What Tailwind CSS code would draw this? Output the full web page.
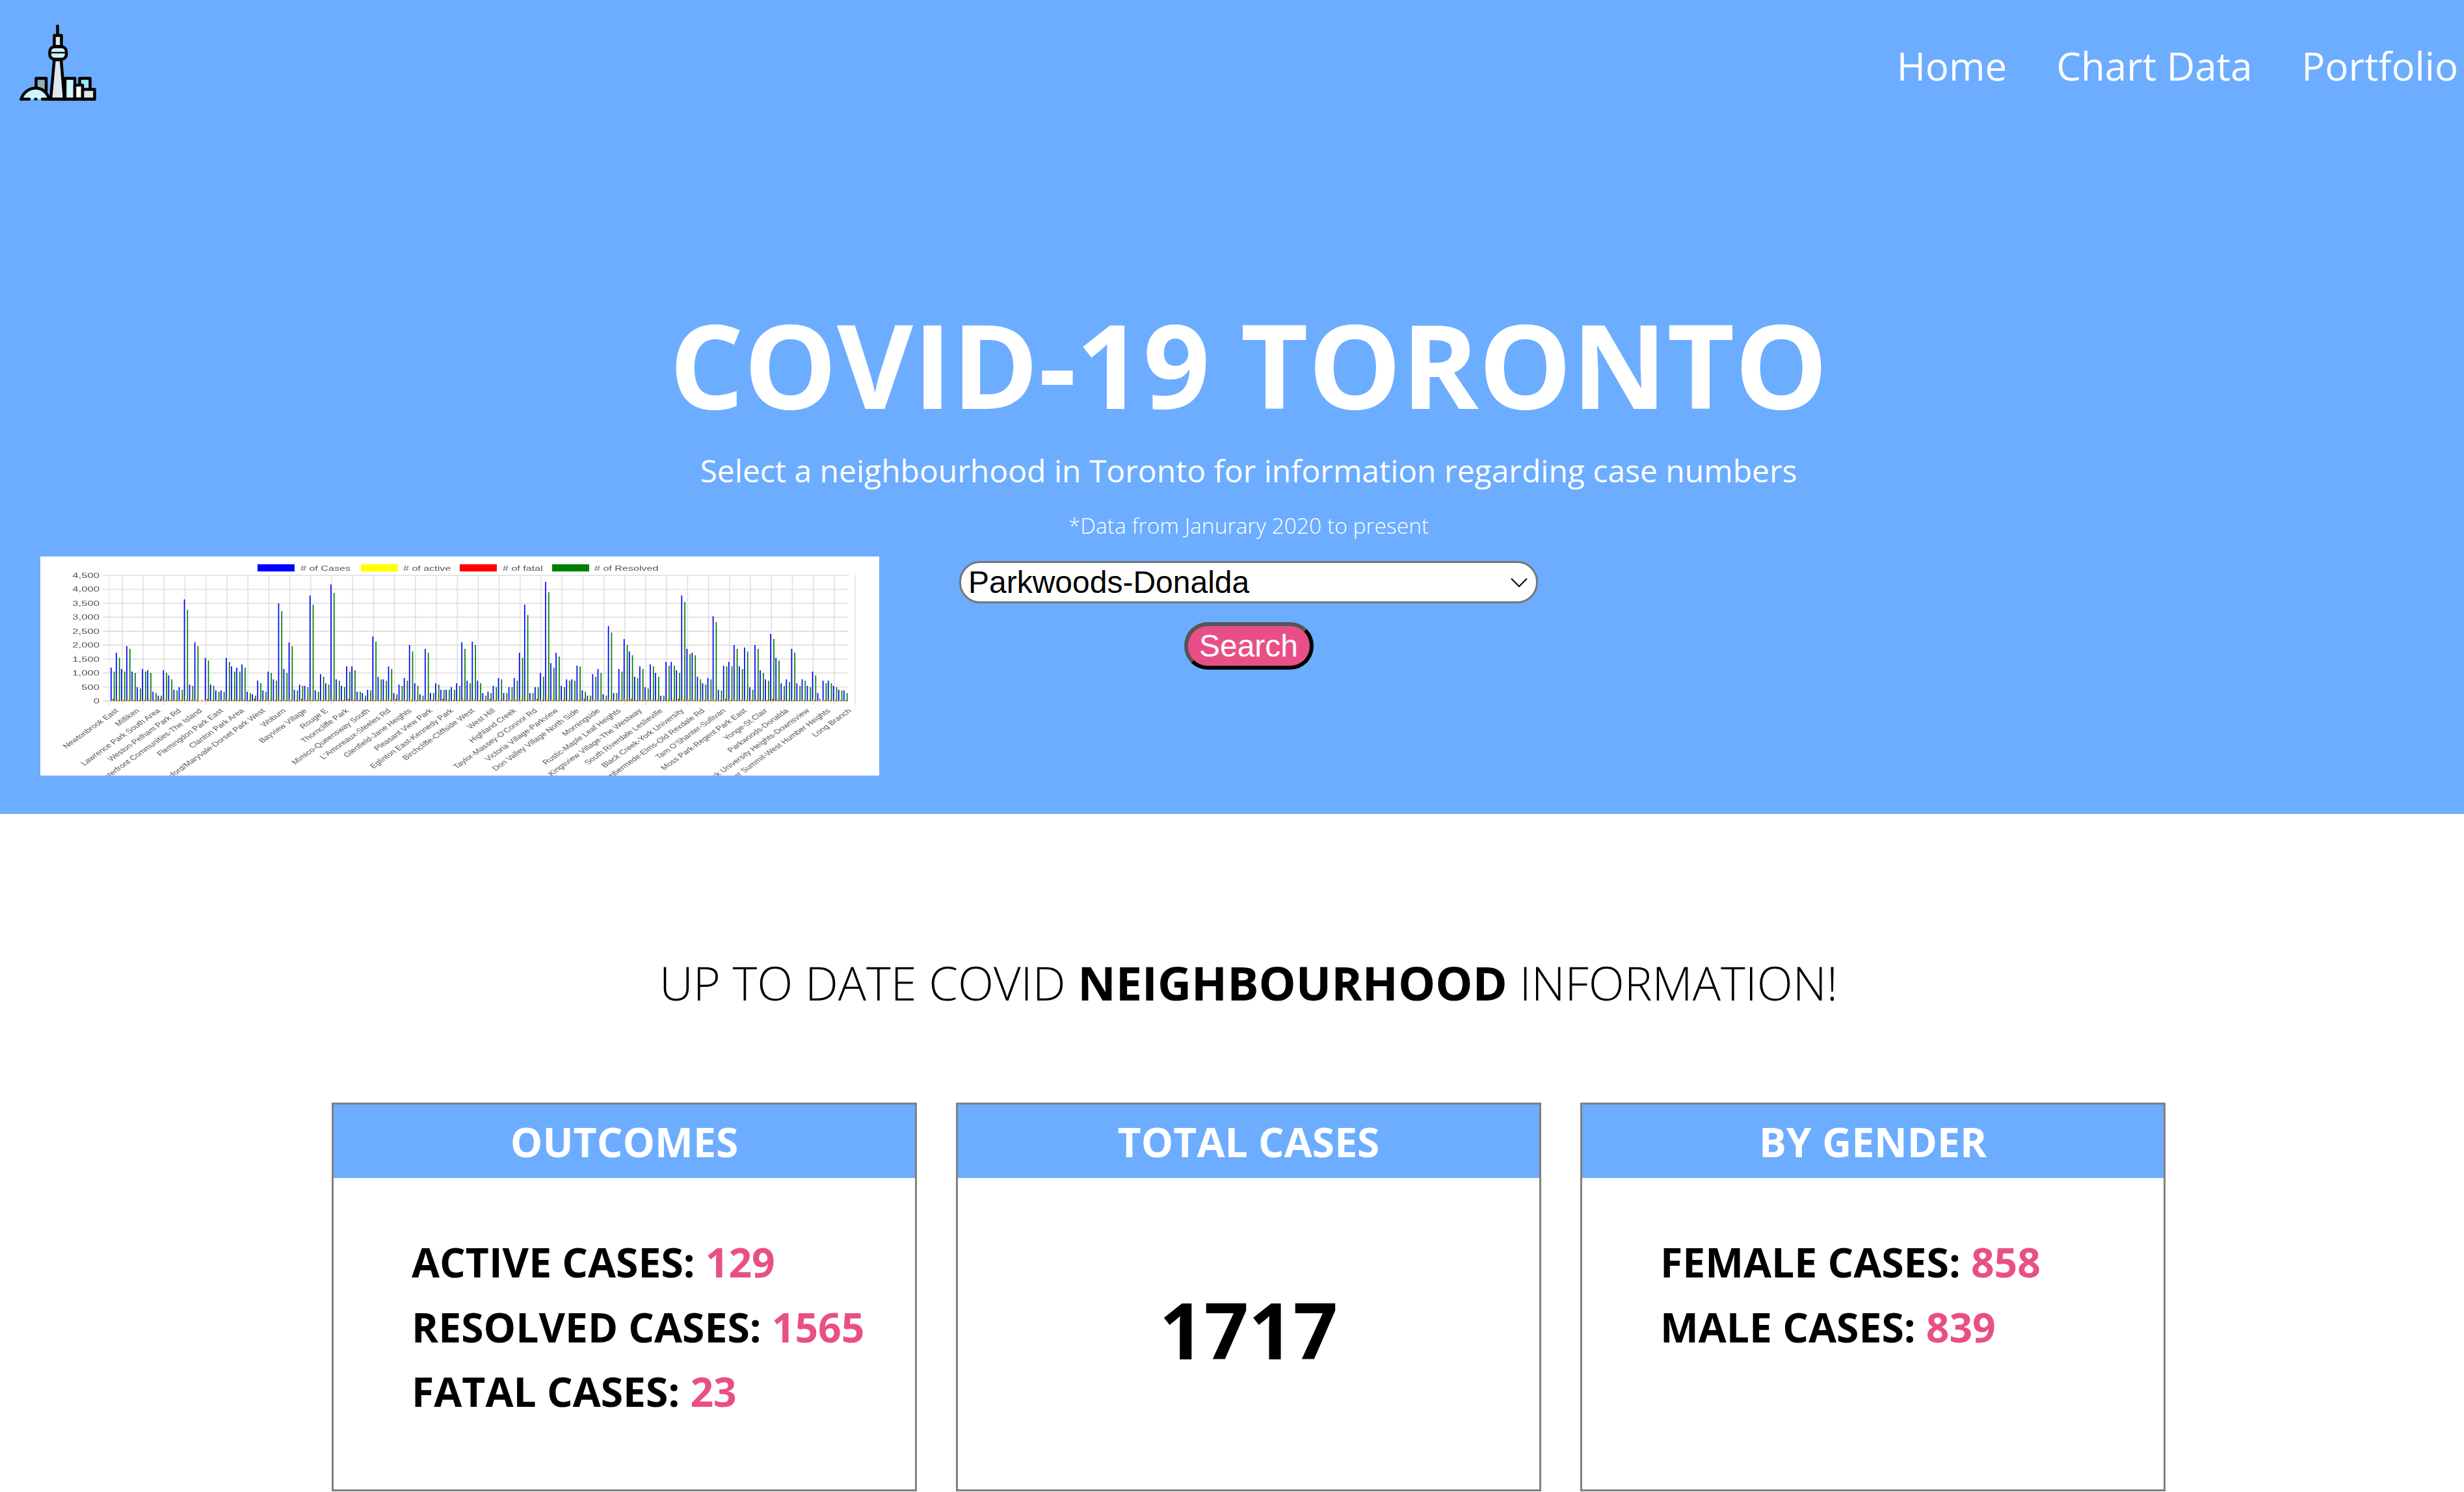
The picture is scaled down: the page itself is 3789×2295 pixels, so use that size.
<!DOCTYPE html>
<html lang="en">
<head>
  <meta charset="UTF-8" />
  <title>COVID-19 Toronto</title>
  <script src="https://cdn.jsdelivr.net/npm/@tailwindcss/browser@4"></script>
</head>
<body class="h-screen overflow-hidden bg-white font-['Open_Sans',sans-serif]">
<div class="w-[3840px]">

  <!-- hero -->
  <section class="h-[1252px] bg-[#6cadff] text-white">
    <nav class="flex justify-between items-start pl-[28px] pt-[36px] h-[396px]">
      <svg class="w-[122px] h-[122px]" viewBox="28 36 122 122" fill="none" stroke="#000" stroke-width="4.5" stroke-linejoin="round" stroke-linecap="round">
        <line x1="88.5" y1="40" x2="88.5" y2="54" />
        <rect x="55.5" y="120.5" width="15.5" height="22" fill="#8fb0c4" />
        <rect x="122.5" y="120.5" width="16" height="18" fill="#99e6f5" />
        <rect x="100" y="120.5" width="15" height="32" fill="#cff4fc" />
        <rect x="115" y="131" width="12" height="21" fill="#fff" />
        <rect x="127" y="137.5" width="18.5" height="15" fill="#e1e6ec" />
        <path d="M78 152.5 L83.5 92 H94 L99 152.5 Z" fill="#e1e6ec" />
        <rect x="83.5" y="54.5" width="11" height="17" fill="#e1e6ec" />
        <rect x="76.5" y="72" width="25.5" height="19" rx="7" fill="#cff4fc" />
        <line x1="78" y1="81" x2="100" y2="81" stroke-width="2.5" stroke="#111" />
        <path d="M32.5 152.5 C36 142 45 135.5 55 135.5 C65 135.5 72 142 76 152.5 Z" fill="#cff4fc" stroke="none" />
        <path d="M32.5 152.5 C36 142 45 135.5 55 135.5 C65 135.5 72 142 76 152.5" />
        <path d="M32.5 152.5 H45 M54.5 152.5 H55.5 M65 152.5 H145" />
      </svg>
      <ul class="flex gap-[76px] pr-[60px] text-[60px] leading-[82px] pt-[24px]">
        <li>Home</li>
        <li>Chart Data</li>
        <li>Portfolio</li>
      </ul>
    </nav>

    <div class="text-center">
      <h1 class="text-[180px] leading-[240px] font-bold mt-[44px]">COVID-19 TORONTO</h1>
      <p class="text-[48px] leading-[68px] mt-[10px]">Select a neighbourhood in Toronto for information regarding case numbers</p>
      <p class="text-[33.6px] leading-[48px] font-light mt-[26px]">*Data from Janurary 2020 to present</p>
    </div>

    <div class="grid grid-cols-[1fr_890px_1fr] mt-[24px]">
      <div id="chart" class="ml-[62px] w-[1290px] h-[337px] bg-white"></div>
      <form class="flex flex-col items-center pt-[7px]">
        <div class="relative w-[890px]">
          <select class="appearance-none block w-full h-[65px] pl-[11px] bg-white text-black text-[48px] leading-[55px] font-['Liberation_Sans',sans-serif] border-[3px] border-[#767676] rounded-[32px]">
            <option>Parkwoods-Donalda</option>
          </select>
          <svg class="absolute right-[16px] top-[26px] w-[26px] h-[15px]" viewBox="0 0 26 15" fill="none" stroke="#000" stroke-width="2"><path d="M1 1 L13 13 L25 1" /></svg>
        </div>
        <button type="button" class="mt-[29px] w-[199px] h-[73px] bg-[#e94f87] text-white text-[48px] leading-none font-['Liberation_Sans',sans-serif] rounded-[36px] border-[6px] border-t-[#555] border-l-[#555] border-r-black border-b-black">Search</button>
      </form>
      <div></div>
    </div>
  </section>

  <!-- info -->
  <section class="pt-[210px]">
    <h2 class="text-center text-[72px] leading-[98px] font-light text-black">UP TO DATE COVID <strong class="font-bold">NEIGHBOURHOOD</strong> INFORMATION!</h2>

    <div class="flex justify-center gap-[60px] mt-[136px]">
      <div class="w-[900px] h-[598px] border-[3px] border-[#808080]">
        <h3 class="h-[113px] bg-[#6cadff] text-white text-center text-[62.4px] leading-[113px] font-bold">OUTCOMES</h3>
        <div class="pl-[120px] pt-[79px] text-[62.4px] leading-[99.5px] font-bold text-black">
          <p>ACTIVE CASES: <span class="text-[#e94f87]">129</span></p>
          <p>RESOLVED CASES: <span class="text-[#e94f87]">1565</span></p>
          <p>FATAL CASES: <span class="text-[#e94f87]">23</span></p>
        </div>
      </div>
      <div class="w-[900px] h-[598px] border-[3px] border-[#808080]">
        <h3 class="h-[113px] bg-[#6cadff] text-white text-center text-[62.4px] leading-[113px] font-bold">TOTAL CASES</h3>
        <p class="text-center pt-[148px] text-[120px] leading-[170px] font-bold text-black">1717</p>
      </div>
      <div class="w-[900px] h-[598px] border-[3px] border-[#808080]">
        <h3 class="h-[113px] bg-[#6cadff] text-white text-center text-[62.4px] leading-[113px] font-bold">BY GENDER</h3>
        <div class="pl-[120px] pt-[79px] text-[62.4px] leading-[99.5px] font-bold text-black">
          <p>FEMALE CASES: <span class="text-[#e94f87]">858</span></p>
          <p>MALE CASES: <span class="text-[#e94f87]">839</span></p>
        </div>
      </div>
    </div>
  </section>
</div>

<script>
  // tops of the bars, read off the chart (y in 3x crop units, 742 = zero)
  const blue = [588,519,594,489,606,678,594,600,699,717,600,624,690,678,273,666,471,742,543,666,693,693,543,582,588,573,699,711,648,693,606,642,291,594,471,690,666,672,255,693,618,660,204,642,672,582,582,699,705,690,444,630,642,582,705,666,636,483,660,711,501,705,660,690,690,678,
    660,471,648,468,648,705,699,672,636,705,678,636,519,297,705,678,612,192,567,519,672,642,642,579,693,717,618,594,711,396,705,594,456,513,630,582,678,573,612,717,561,561,600,255,501,519,630,660,636,351,690,579,561,483,582,495,678,483,600,642,432,543,660,642,501,660,642,672,606,705,648,648,672,690,693];
  const green = [606,543,606,501,612,684,606,612,705,717,612,642,693,690,321,672,489,742,555,672,699,699,561,606,606,588,705,717,660,699,612,648,327,612,489,693,672,678,297,699,630,666,243,648,678,606,600,699,717,693,468,642,648,594,711,672,648,513,672,717,519,705,666,690,690,690,
    672,501,660,483,660,717,705,678,642,705,678,648,543,345,705,678,630,240,588,537,678,648,648,582,699,717,630,612,717,426,705,606,483,531,636,594,684,582,630,717,579,579,612,285,525,531,642,666,642,378,693,582,582,501,594,513,690,501,612,648,456,555,672,654,519,672,648,678,624,742,660,660,678,693,705];
  const names = ["Newtonbrook East","Milliken","Lawrence Park South Area","Weston-Pelham Park Rd","Waterfront Communities-The Island","Flemingdon Park East","Clanton Park Area","Wexford/Maryvale-Dorset Park West","Woburn","Bayview Village","Rouge E","Thorncliffe Park","Mimico-Queensway South","L'Amoreaux-Steeles Rd","Glenfield-Jane Heights","Pleasant View Park","Eglinton East-Kennedy Park","Birchcliffe-Cliffside West","West Hill","Highland Creek","Taylor-Massey-O'Connor Rd","Victoria Village-Parkview","Don Valley Village North Side","Morningside","Rustic-Maple Leaf Heights","Kingsview Village-The Westway","South Riverdale Leslieville","Black Creek-York University","Humbermede-Elms-Old Rexdale Rd","Tam O'Shanter-Sullivan","Moss Park-Regent Park East","Yonge-St.Clair","Parkwoods-Donalda","York University Heights-Downsview","Humber Summit-West Humber Heights","Long Branch"];

  const yTop = v => 830 + v / 3;
  const base = 1077.3;
  let s = '<svg class="block blur-[0.6px]" width="1290" height="337" viewBox="62 855 1290 337" font-family="Liberation Sans, sans-serif" fill="#555">';

  // grid
  for (let i = 0; i <= 9; i++) {
    const y = 884 + i * 21.47;
    s += `<line x1="158" x2="1305" y1="${y}" y2="${y}" stroke="#ddd" stroke-width="${i == 9 ? 2 : 1.6}"/>`;
    const label = (4500 - i * 500).toLocaleString("en-US");
    s += `<text text-anchor="end" transform="translate(153 ${y + 4}) scale(1.45 1)" font-size="11.5">${label}</text>`;
  }
  s += '<line x1="168" x2="168" y1="884" y2="1083" stroke="#ddd"/>';
  names.forEach((n, i) => {
    const x = 188 + i * 32.2;
    s += `<line x1="${x}" x2="${x}" y1="884" y2="1083" stroke="#ddd" stroke-width="1.4"/>`;
    s += `<text text-anchor="end" transform="translate(${183 + i * 32.2} 1093) scale(1.4 1) rotate(-45)" font-size="10">${n}</text>`;
  });

  // bars
  blue.forEach((b, i) => {
    const x = 170 + i * 8.05;
    const h = base - yTop(b);
    const yellow = Math.min(9, 1 + h * 0.04 + (i * 7 % 5) * 0.4);
    const red = 1.5 + (i % 9 == 0 ? 2 : 0);
    s += `<rect x="${x}" y="${yTop(b)}" width="1.7" height="${h}" fill="#00f"/>`;
    s += `<rect x="${x + 1.7}" y="${base - yellow}" width="1.6" height="${yellow}" fill="#ff0"/>`;
    s += `<rect x="${x + 3.2}" y="${base - red}" width="1.6" height="${red}" fill="#f00"/>`;
    s += `<rect x="${x + 4.8}" y="${yTop(green[i])}" width="1.7" height="${base - yTop(green[i])}" fill="#008000"/>`;
  });

  // legend
  [[396, "#00f", 462, "# of Cases"], [555, "#ff0", 620, "# of active"], [707, "#f00", 773, "# of fatal"], [849, "#008000", 914, "# of Resolved"]].forEach(l => {
    s += `<rect x="${l[0]}" y="867" width="57" height="11" fill="${l[1]}"/>`;
    s += `<text transform="translate(${l[2]} 877) scale(1.4 1)" font-size="11.5">${l[3]}</text>`;
  });
  document.getElementById("chart").innerHTML = s + "</svg>";
</script>
</body>
</html>
